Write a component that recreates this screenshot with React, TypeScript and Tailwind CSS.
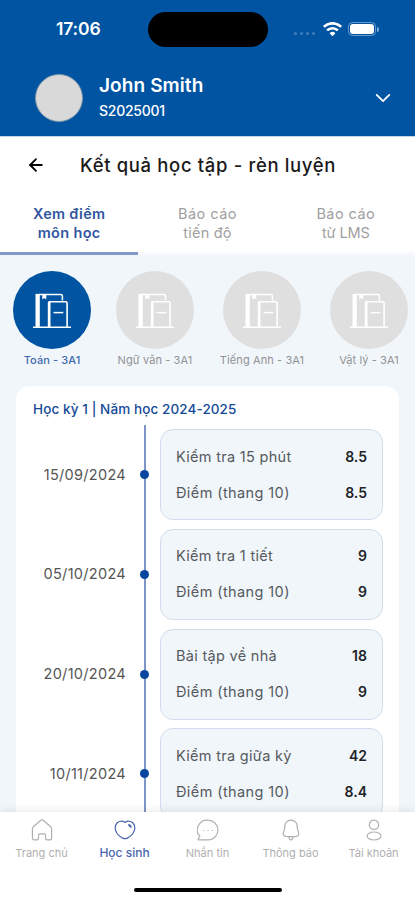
import { useState } from "react";
import type { ReactNode } from "react";
import { ArrowLeft, ChevronDown } from "lucide-react";

const tabs = [
	{ id: "scores", lines: ["Xem điểm", "môn học"], tracking: ["tracking-[0.25px]", "tracking-[0.35px]"] },
	{ id: "progress", lines: ["Báo cáo", "tiến độ"], tracking: ["tracking-[0.45px]", "tracking-[0.2px]"] },
	{ id: "lms", lines: ["Báo cáo", "từ LMS"], tracking: ["tracking-[0.45px]", "tracking-[-0.1px]"] }
];

const subjects = [
	{ id: 1, name: "Toán - 3A1", width: "w-[78px]" },
	{ id: 2, name: "Ngữ văn - 3A1", width: "w-[78px]" },
	{ id: 3, name: "Tiếng Anh - 3A1", width: "w-[86px]" },
	{ id: 4, name: "Vật lý - 3A1", width: "w-[78px]" }
];

const scores = [
	{ date: "15/09/2024", title: "Kiểm tra 15 phút", score: "8.5", scaled: "8.5" },
	{ date: "05/10/2024", title: "Kiểm tra 1 tiết", score: "9", scaled: "9" },
	{ date: "20/10/2024", title: "Bài tập về nhà", score: "18", scaled: "9" },
	{ date: "10/11/2024", title: "Kiểm tra giữa kỳ", score: "42", scaled: "8.4" }
];

const navItems: { label: string; icon: ReactNode }[] = [
	{
		label: "Trang chủ",
		icon: (
			<path d="M2.300 7.800 9.500 1.500a2.300 2.300 0 0 1 3 0l7.200 6.300c.6.6.9 1.300.9 2.100v9c0 1.100-.9 2-2 2h-2.200c-1.100 0-1.900-.8-1.900-1.900v-2.600c0-.9-.7-1.500-1.500-1.500H9c-.8 0-1.500.6-1.500 1.500V19c0 1.100-.8 1.900-1.900 1.900H3.400c-1.100 0-2-.9-2-2v-9c0-.8.3-1.500.9-2.100Z" />
		)
	},
	{
		label: "Học sinh",
		icon: (
			<>
				<path d="M11 3.400C8.600 1.700 5 1.800 3 4 1.200 6 .9 9 1.700 11.600c1.100 3.400 4.100 6 7 7.500 1.500.8 3.100.8 4.600 0 2.900-1.500 5.900-4.100 7-7.500.8-2.600.5-5.600-1.300-7.600-2-2.200-5.600-2.300-8-.6Z" />
				<path d="M14.300 6c1.500.100 2.500 1.100 2.600 2.600" strokeWidth="1.800" />
			</>
		)
	},
	{
		label: "Nhắn tin",
		icon: (
			<>
				<path d="M11 1.100a9.900 9.900 0 1 1 0 19.800H1.800c-.7 0-.9-.7-.5-1.200l1.500-2.200A9.900 9.900 0 0 1 11 1.100Z" />
				<path d="M6.800 11.500h.2M11 11.500h.2M15.200 11.500h.2" strokeLinecap="round" />
			</>
		)
	},
	{
		label: "Thông báo",
		icon: (
			<>
				<path d="M11 1.100C7.300 1.100 4.800 3.900 4.800 7.300c0 3.100-1 4.700-1.500 6.500-.5 2 .5 3.200 2.300 3.500 3.500.5 7.300.5 10.800 0 1.800-.3 2.800-1.500 2.300-3.500-.5-1.800-1.500-3.400-1.500-6.500 0-3.400-2.500-6.200-6.200-6.200Z" />
				<path d="M9 17.800c.1 1.900.9 3.100 2 3.100s1.900-1.200 2-3.100" />
			</>
		)
	},
	{
		label: "Tài khoản",
		icon: (
			<>
				<circle cx="11" cy="5.800" r="4.700" />
				<ellipse cx="11" cy="17" rx="7" ry="4" />
			</>
		)
	}
];

const BooksIcon = () => (
	<svg viewBox="0 0 38 36" className="h-9 w-[38px]" fill="none" stroke="white">
		<path d="M0 35.300h38" strokeWidth="1.600" />
		{/* back book: spine, cover edge and bookmark */}
		<path d="M2.500 1.900h4.300v33H2.500Z" fill="white" stroke="none" />
		<path d="M6 2.500h21.800q1.600 0 1.600 1.600v4.400" strokeWidth="1.500" />
		<path d="M9.300 2.500h4v5l-2-1.500-2 1.500Z" fill="white" stroke="none" />
		{/* front book */}
		<path d="M14.800 35V10.700q0-1.700 1.700-1.700h1v26Z" fill="white" stroke="none" />
		<path d="M17 9.700h15.600q1.500 0 1.500 1.500V35" strokeWidth="1.600" />
		<path d="M20.500 20.600h9.800" strokeWidth="1.500" />
	</svg>
);

const StatusBar = () => (
	<div className="flex h-[58px] items-center text-white">
		<div className="w-[148px] pl-[56px] text-[17.500px] leading-none font-semibold tracking-[-0.15px]">17:06</div>
		<div className="h-[35px] w-[120px] rounded-full bg-black" />
		<div className="ml-[26px] flex items-center">
			<div className="mt-[8px] flex gap-[3px]">
				{[0, 1, 2, 3].map((dot) => (
					<span key={dot} className="size-[3px] rounded-full bg-white/25" />
				))}
			</div>
			<svg viewBox="0 0 19 15" className="ml-[8px] h-[15px] w-[19px]" fill="none" stroke="white">
				<path d="M.9 4.800a12.300 12.300 0 0 1 17.200 0" strokeWidth="2.700" />
				<path d="M4.100 8.400a7.700 7.700 0 0 1 10.800 0" strokeWidth="2.500" />
				<path d="M6.600 11.200a4.200 4.200 0 0 1 5.800 0L9.500 14.200Z" fill="white" stroke="none" />
			</svg>
			<div className="ml-[6px] h-[14px] w-[28px] rounded-[4.500px] border border-white/40 p-px">
				<div className="h-full rounded-[3px] bg-white" />
			</div>
			<span className="ml-px h-[5px] w-[2px] rounded-r-full bg-white/50" />
		</div>
	</div>
);

export default function App() {
	const [activeTab, setActiveTab] = useState("scores");
	const [activeSubject, setActiveSubject] = useState(1);
	const [activeNav, setActiveNav] = useState("Học sinh");

	return (
		<div className="flex h-[900px] w-[415px] flex-col overflow-hidden bg-[#f1f6fb] font-['Inter','Noto_Sans',sans-serif]">
			{/* Header */}
			<header className="h-[137px] shrink-0 border-b border-[#c4d5eb] bg-[#0054a2] text-white">
				<StatusBar />
				<div className="mt-[15px] flex h-[49px] items-center pr-[23px] pl-[35px]">
					<div className="size-12 rounded-full border border-[#8096aa] bg-[#d9d9d9]" />
					<div className="ml-4 flex-1">
						<div className="text-[19px] leading-[25px] font-semibold tracking-[0.1px]">John Smith</div>
						<div className="text-[14px] leading-[25px] font-medium tracking-[-0.25px]">S2025001</div>
					</div>
					<ChevronDown className="size-[18px] scale-[1.4]" strokeWidth={1.700} />
				</div>
			</header>

			{/* Page title */}
			<div className="flex h-[56px] shrink-0 items-center bg-white pl-[26px] text-black">
				<ArrowLeft className="size-5" strokeWidth={2.200} />
				<h1 className="ml-[34px] text-[18.500px] leading-none font-medium tracking-[0.65px] whitespace-nowrap text-[#1a1a1a]">
					Kết quả học tập - rèn luyện
				</h1>
			</div>

			{/* Tabs */}
			<div className="flex h-[62px] shrink-0 bg-white">
				{tabs.map((tab) => (
					<button
						key={tab.id}
						onClick={() => setActiveTab(tab.id)}
						className={`flex-1 border-b-[3px] pt-px text-[14.500px] leading-[19px] ${
							activeTab === tab.id
								? "border-[#8498c8] font-semibold text-[#31569f]"
								: "border-[#f7f9fc] text-[#a0a0a0]"
						}`}
					>
						{tab.lines.map((line, i) => (
							<span key={line} className={`block ${tab.tracking[i]}`}>
								{line}
							</span>
						))}
					</button>
				))}
			</div>

			{/* Subjects */}
			<div className="flex shrink-0 gap-[25px] pt-4 pl-[13px]">
				{subjects.map((subject) => (
					<button
						key={subject.id}
						onClick={() => setActiveSubject(subject.id)}
						className={`flex shrink-0 flex-col items-center ${subject.width}`}
					>
						<span
							className={`flex size-[78px] shrink-0 items-center justify-center rounded-full ${
								activeSubject === subject.id ? "bg-[#0054a2]" : "bg-[#dfdfdf]"
							}`}
						>
							<BooksIcon />
						</span>
						<span
							className={`mt-[3px] text-[11px] leading-4 tracking-[0.1px] whitespace-nowrap ${
								activeSubject === subject.id ? "font-medium text-[#426bab]" : "text-[#919294]"
							}`}
						>
							{subject.name}
						</span>
					</button>
				))}
			</div>

			{/* Score timeline */}
			<main className="mx-4 mt-[18px] min-h-0 flex-1 overflow-hidden rounded-t-[14px] bg-white">
				<h2 className="pt-[13px] pl-[17px] text-[13.500px] leading-5 font-medium tracking-[0.1px] text-[#164b98]">
					Học kỳ 1 | Năm học 2024-2025
				</h2>
				<div className="mt-[6px] flex">
					<div className="flex w-[130px] shrink-0 flex-col gap-[8.800px] border-r-2 border-[#7f95c9] pt-1">
						{scores.map((item) => (
							<div key={item.date} className="-mr-[5px] flex h-[91px] items-center justify-end">
								<span className="text-[14.500px] tracking-[0.3px] text-[#555555]">{item.date}</span>
								<span className="ml-[14px] size-[9px] rounded-full bg-[#0547a0]" />
							</div>
						))}
					</div>
					<div className="ml-[14px] flex w-[223px] flex-col gap-[8.800px] pt-1">
						{scores.map((item) => (
							<div
								key={item.date}
								className="flex h-[91px] flex-col justify-center gap-4 rounded-[13px] border-[1.500px] border-[#d2dcec] bg-[#f1f6fb] px-[15px] text-[14.500px] leading-5 text-[#565a5e]"
							>
								<div className="flex justify-between">
									<span className="tracking-[0.3px]">{item.title}</span>
									<span className="text-[14px] font-semibold text-[#202327]">{item.score}</span>
								</div>
								<div className="flex justify-between">
									<span className="tracking-[0.4px]">Điểm (thang 10)</span>
									<span className="text-[14px] font-semibold text-[#202327]">{item.scaled}</span>
								</div>
							</div>
						))}
					</div>
				</div>
			</main>

			{/* Bottom navigation */}
			<nav className="relative h-[88px] shrink-0 bg-white shadow-[0_-2px_8px_rgba(0,0,0,0.08)]">
				<div className="flex pt-[7px]">
					{navItems.map((item) => (
						<button
							key={item.label}
							onClick={() => setActiveNav(item.label)}
							className={`flex flex-1 flex-col items-center ${
								activeNav === item.label ? "font-medium text-[#4a66b0]" : "text-[#b0b0b0]"
							}`}
						>
							<svg viewBox="0 0 22 22" className="size-[22px]" fill="none" stroke="currentColor" strokeWidth="1.200">
								{item.icon}
							</svg>
							<span
								className={`mt-1 leading-4 whitespace-nowrap ${
									activeNav === item.label ? "text-[12px]" : "text-[11px]"
								}`}
							>
								{item.label}
							</span>
						</button>
					))}
				</div>
				<div className="mx-auto mt-[27px] h-1 w-[148px] rounded-full bg-black" />
			</nav>
		</div>
	);
}
